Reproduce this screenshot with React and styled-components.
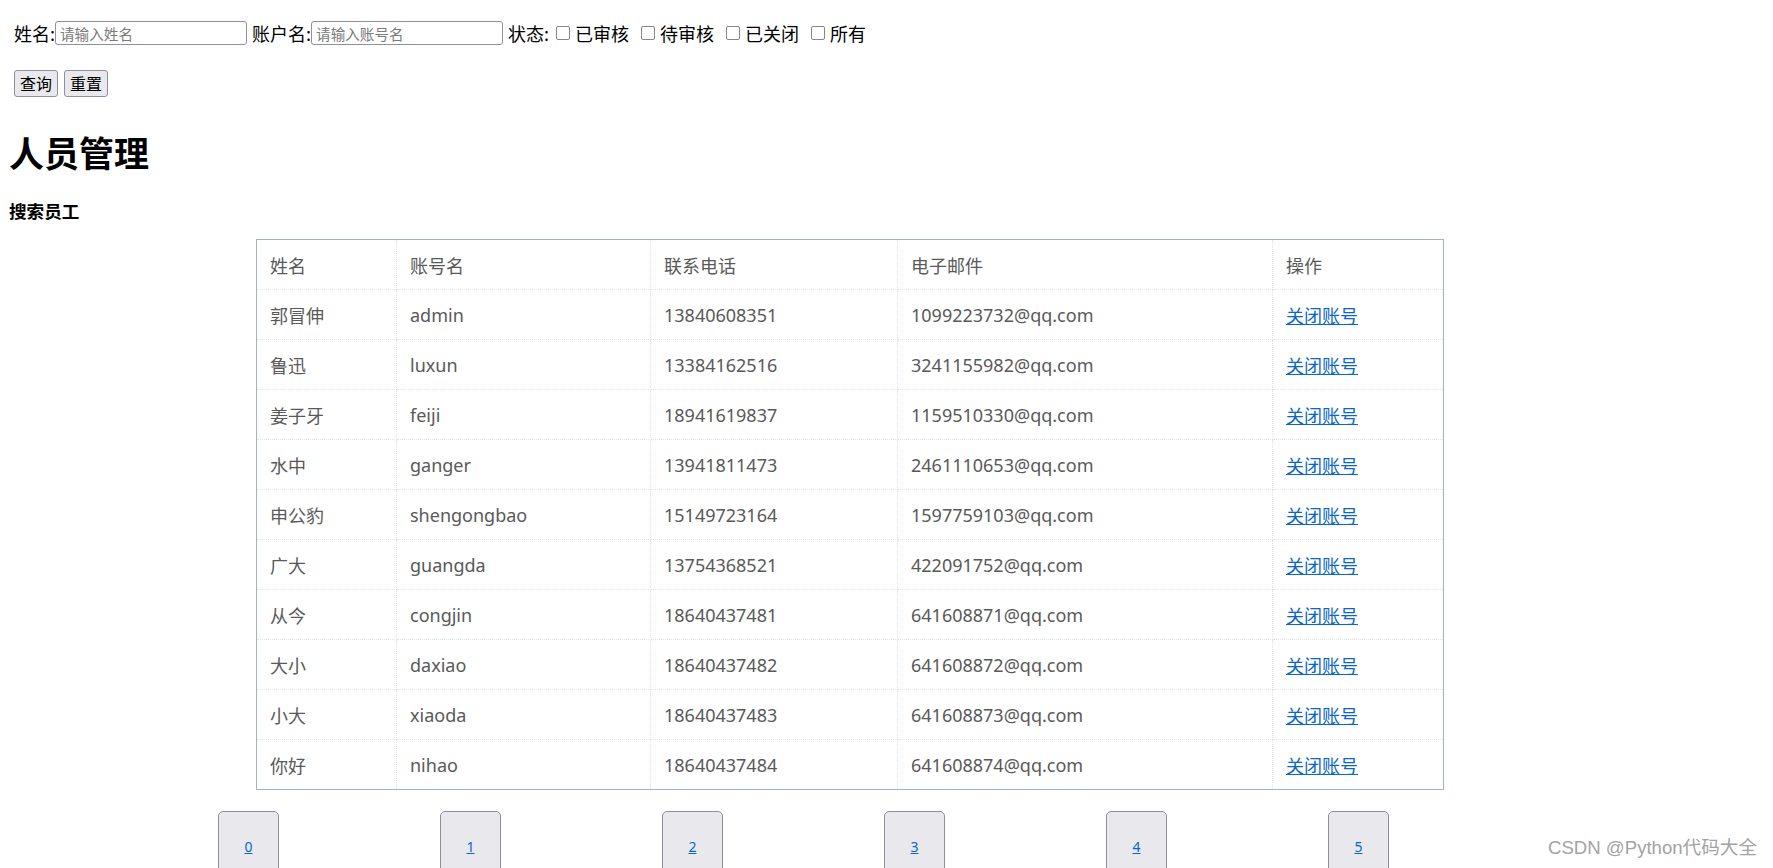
import React from 'react'
import styled, { createGlobalStyle } from 'styled-components'

const users = [
  { name: '郭冒伸', account: 'admin', phone: '13840608351', email: '1099223732@qq.com' },
  { name: '鲁迅', account: 'luxun', phone: '13384162516', email: '3241155982@qq.com' },
  { name: '姜子牙', account: 'feiji', phone: '18941619837', email: '1159510330@qq.com' },
  { name: '水中', account: 'ganger', phone: '13941811473', email: '2461110653@qq.com' },
  { name: '申公豹', account: 'shengongbao', phone: '15149723164', email: '1597759103@qq.com' },
  { name: '广大', account: 'guangda', phone: '13754368521', email: '422091752@qq.com' },
  { name: '从今', account: 'congjin', phone: '18640437481', email: '641608871@qq.com' },
  { name: '大小', account: 'daxiao', phone: '18640437482', email: '641608872@qq.com' },
  { name: '小大', account: 'xiaoda', phone: '18640437483', email: '641608873@qq.com' },
  { name: '你好', account: 'nihao', phone: '18640437484', email: '641608874@qq.com' }
]

const columns = [
  { title: '姓名', width: 140 },
  { title: '账号名', width: 254 },
  { title: '联系电话', width: 247 },
  { title: '电子邮件', width: 375 },
  { title: '操作', width: 171 }
]

const statuses = ['已审核', '待审核', '已关闭', '所有']

const GlobalStyle = createGlobalStyle`
  html, body {
    margin: 0;
    overflow: hidden;
    background: #fff;
  }
`

export default function App() {
  return (
    <>
      <GlobalStyle />
      <Page>
        <FilterRow>
          <Field>
            姓名:<TextInput placeholder='请输入姓名' />
          </Field>
          <Field>
            账户名:<TextInput placeholder='请输入账号名' />
          </Field>
          <Field>状态:</Field>
          {statuses.map((s) => (
            <CheckItem key={s}>
              <Checkbox type='checkbox' />
              {s}
            </CheckItem>
          ))}
        </FilterRow>
        <ButtonRow>
          <Button>查询</Button>
          <Button>重置</Button>
        </ButtonRow>

        <Title>人员管理</Title>
        <SubTitle>搜索员工</SubTitle>

        <Table>
          <colgroup>
            {columns.map((c) => (
              <Col key={c.title} $w={c.width} />
            ))}
          </colgroup>
          <thead>
            <Row>
              {columns.map((c) => (
                <Cell as='th' key={c.title}>{c.title}</Cell>
              ))}
            </Row>
          </thead>
          <tbody>
            {users.map((u) => (
              <Row key={u.account}>
                <Cell>{u.name}</Cell>
                <Cell>{u.account}</Cell>
                <Cell>{u.phone}</Cell>
                <Cell>{u.email}</Cell>
                <Cell>
                  <CloseLink href='#'>关闭账号</CloseLink>
                </Cell>
              </Row>
            ))}
          </tbody>
        </Table>

        <Pager>
          {[0, 1, 2, 3, 4, 5].map((n) => (
            <PageButton key={n}>
              <PageLink href='#'>{n}</PageLink>
            </PageButton>
          ))}
        </Pager>

        <Watermark>CSDN @Python代码大全</Watermark>
      </Page>
    </>
  )
}

const Page = styled.div`
  position: relative;
  height: 100vh;
  box-sizing: border-box;
  padding: 20px 9px 0;
  overflow: hidden;
  font-family: "Noto Sans CJK SC", "Noto Sans", sans-serif;
  color: #000;
`

const FilterRow = styled.div`
  display: flex;
  align-items: center;
  height: 26px;
  padding-left: 5px;
  font-size: 18px;
  line-height: 26px;
`

const Field = styled.label`
  display: inline-flex;
  align-items: center;
  margin-right: 5px;
  white-space: nowrap;
`

const TextInput = styled.input`
  box-sizing: border-box;
  width: 192px;
  height: 24px;
  margin: 0;
  padding: 0 4px;
  border: 1px solid #8f8f9d;
  border-radius: 3px;
  font-family: "Noto Sans CJK SC", sans-serif;
  font-size: 14.6px;
  &::placeholder {
    color: #7a7a7a;
  }
`

const CheckItem = styled.label`
  display: inline-flex;
  align-items: center;
  margin-right: 10px;
  white-space: nowrap;
`

const Checkbox = styled.input`
  appearance: none;
  box-sizing: border-box;
  width: 14px;
  height: 14px;
  margin: 0 5px 0 2px;
  background: #fff;
  border: 1.5px solid #85858f;
  border-radius: 2px;
`

const ButtonRow = styled.div`
  display: flex;
  gap: 6px;
  margin-top: 24px;
  padding-left: 5px;
`

const Button = styled.button`
  height: 27px;
  padding: 0 5px;
  background: #e9e9ed;
  border: 1px solid #8f8f9d;
  border-radius: 3px;
  font-family: "Noto Sans CJK SC", sans-serif;
  font-size: 16px;
  line-height: 25px;
  color: #000;
`

const Title = styled.h1`
  margin: 35px 0 0;
  font-size: 35px;
  line-height: 40px;
  font-weight: 700;
`

const SubTitle = styled.h4`
  margin: 28px 0 0;
  font-size: 17.6px;
  line-height: 22px;
  font-weight: 700;
`

const Table = styled.table`
  table-layout: fixed;
  width: 1188px;
  margin: 17px 0 0 247px;
  border-collapse: collapse;
  border: 1px solid #a3b3c5;
`

const Col = styled.col`
  width: ${(p) => p.$w}px;
`

const Row = styled.tr`
  height: 50px;
`

const Cell = styled.td`
  padding: 0 13px;
  border: 1px dotted #dfe4eb;
  color: #595959;
  font-family: "Noto Sans", "Noto Sans CJK SC", sans-serif;
  font-size: 18px;
  font-weight: 400;
  text-align: left;
  white-space: nowrap;
`

const CloseLink = styled.a`
  color: #0a66c8;
  text-decoration: underline;
  font-family: "Noto Sans CJK SC", sans-serif;
`

const Pager = styled.div`
  display: flex;
  gap: 161px;
  margin: 21px 0 0 209px;
`

const PageButton = styled.div`
  box-sizing: border-box;
  display: flex;
  flex-shrink: 0;
  align-items: center;
  justify-content: center;
  width: 61px;
  height: 70px;
  background: #e9e9ed;
  border: 1px solid #8f8f9d;
  border-radius: 5px;
`

const PageLink = styled.a`
  color: #0a66c8;
  font-family: "Noto Sans", sans-serif;
  font-size: 14px;
  text-decoration: underline;
`

const Watermark = styled.div`
  position: absolute;
  right: 16px;
  bottom: 9px;
  font-family: "Liberation Sans", "Noto Sans CJK SC", sans-serif;
  font-size: 18.6px;
  line-height: 22px;
  color: #a3a3a3;
  text-shadow: 0 0 1px #fff;
`
